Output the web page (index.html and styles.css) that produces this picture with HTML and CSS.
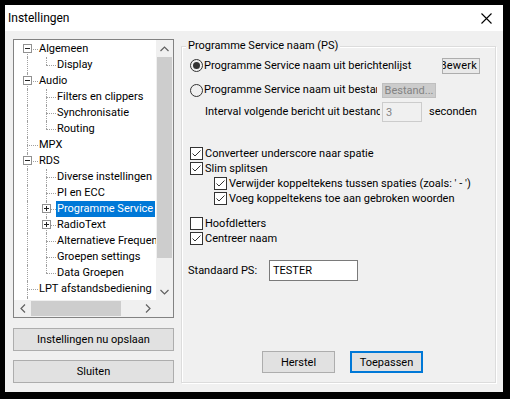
FILE: index.html
```html
<!DOCTYPE html>
<html lang="nl">
<head>
  <meta charset="UTF-8">
  <title>Instellingen</title>
  <link rel="stylesheet" href="styles.css">
</head>
<body>
  <div class="window">
    <div class="titlebar">
      <span class="title">Instellingen</span>
      <svg class="close" width="11" height="11" viewBox="0 0 11 11"><path d="M0.5 0.5L10.5 10.5M10.5 0.5L0.5 10.5" stroke="#000" stroke-width="1.1" fill="none"/></svg>
    </div>

    <div class="content">
      <div class="sidebar">
        <div class="tree">
          <div class="tree-rows">
            <div class="node"><span class="cell c0 f"><i class="exp"></i></span><span class="lbl">Algemeen</span></div>
            <div class="node"><span class="cell c0 v"></span><span class="cell c1 l"></span><span class="lbl">Display</span></div>
            <div class="node"><span class="cell c0 t"><i class="exp"></i></span><span class="lbl">Audio</span></div>
            <div class="node"><span class="cell c0 v"></span><span class="cell c1 t"></span><span class="lbl">Filters en clippers</span></div>
            <div class="node"><span class="cell c0 v"></span><span class="cell c1 t"></span><span class="lbl">Synchronisatie</span></div>
            <div class="node"><span class="cell c0 v"></span><span class="cell c1 l"></span><span class="lbl">Routing</span></div>
            <div class="node"><span class="cell c0 t"></span><span class="lbl">MPX</span></div>
            <div class="node"><span class="cell c0 t"><i class="exp"></i></span><span class="lbl">RDS</span></div>
            <div class="node"><span class="cell c0 v"></span><span class="cell c1 t"></span><span class="lbl">Diverse instellingen</span></div>
            <div class="node"><span class="cell c0 v"></span><span class="cell c1 t"></span><span class="lbl">PI en ECC</span></div>
            <div class="node"><span class="cell c0 v"></span><span class="cell c1 t"><i class="exp plus"></i></span><span class="lbl selected">Programme Service</span></div>
            <div class="node"><span class="cell c0 v"></span><span class="cell c1 t"><i class="exp plus"></i></span><span class="lbl">RadioText</span></div>
            <div class="node"><span class="cell c0 v"></span><span class="cell c1 t"></span><span class="lbl">Alternatieve Frequenties</span></div>
            <div class="node"><span class="cell c0 v"></span><span class="cell c1 t"></span><span class="lbl">Groepen settings</span></div>
            <div class="node"><span class="cell c0 v"></span><span class="cell c1 l"></span><span class="lbl">Data Groepen</span></div>
            <div class="node"><span class="cell c0 t"></span><span class="lbl">LPT afstandsbediening</span></div>
            <div class="node"><span class="cell c0 l"></span><span class="lbl">Log bestanden</span></div>
          </div>
          <div class="vscroll">
            <span class="arrow"><svg width="9" height="6" viewBox="0 0 9 6"><path d="M0.5 5L4.5 1L8.5 5" stroke="#606060" stroke-width="1.2" fill="none"/></svg></span>
            <span class="vtrack"><span class="vthumb"></span></span>
            <span class="arrow"><svg width="9" height="6" viewBox="0 0 9 6"><path d="M0.5 1L4.5 5L8.5 1" stroke="#606060" stroke-width="1.2" fill="none"/></svg></span>
          </div>
          <div class="hscroll">
            <span class="arrow"><svg width="6" height="9" viewBox="0 0 6 9"><path d="M5 0.5L1 4.5L5 8.5" stroke="#606060" stroke-width="1.2" fill="none"/></svg></span>
            <span class="htrack"><span class="hthumb"></span></span>
            <span class="arrow"><svg width="6" height="9" viewBox="0 0 6 9"><path d="M1 0.5L5 4.5L1 8.5" stroke="#606060" stroke-width="1.2" fill="none"/></svg></span>
          </div>
          <div class="corner"></div>
        </div>

        <button class="btn side-btn save-btn">Instellingen nu opslaan</button>
        <button class="btn side-btn">Sluiten</button>
      </div>

      <div class="group">
        <div class="group-title">Programme Service naam (PS)</div>

        <div class="row radio-row first">
          <span class="radio checked"></span>
          <span class="txt">Programme Service naam uit berichtenlijst</span>
          <button class="btn small bewerk"><span>Bewerk</span></button>
        </div>

        <div class="row radio-row second">
          <span class="radio"></span>
          <span class="txt clip-bestand">Programme Service naam uit bestand</span>
          <button class="btn small disabled bestand">Bestand...</button>
        </div>

        <div class="row interval-row">
          <span class="txt clip-interval">Interval volgende bericht uit bestand</span>
          <span class="field disabled small-field">3</span>
          <span class="txt seconds">seconden</span>
        </div>

        <div class="checks">
          <div class="row check-row"><span class="check"><svg width="11" height="11" viewBox="0 0 11 11"><path d="M1.5 5.5L4 8L9.5 2.5" stroke="#333" stroke-width="1" fill="none"/></svg></span><span class="txt">Converteer underscore naar spatie</span></div>
          <div class="row check-row"><span class="check"><svg width="11" height="11" viewBox="0 0 11 11"><path d="M1.5 5.5L4 8L9.5 2.5" stroke="#333" stroke-width="1" fill="none"/></svg></span><span class="txt">Slim splitsen</span></div>
          <div class="row check-row sub"><span class="check"><svg width="11" height="11" viewBox="0 0 11 11"><path d="M1.5 5.5L4 8L9.5 2.5" stroke="#333" stroke-width="1" fill="none"/></svg></span><span class="txt">Verwijder koppeltekens tussen spaties (zoals: ' - ')</span></div>
          <div class="row check-row sub"><span class="check"><svg width="11" height="11" viewBox="0 0 11 11"><path d="M1.5 5.5L4 8L9.5 2.5" stroke="#333" stroke-width="1" fill="none"/></svg></span><span class="txt">Voeg koppeltekens toe aan gebroken woorden</span></div>
        </div>

        <div class="checks second-checks">
          <div class="row check-row"><span class="check"></span><span class="txt">Hoofdletters</span></div>
          <div class="row check-row"><span class="check"><svg width="11" height="11" viewBox="0 0 11 11"><path d="M1.5 5.5L4 8L9.5 2.5" stroke="#333" stroke-width="1" fill="none"/></svg></span><span class="txt">Centreer naam</span></div>
        </div>

        <div class="row ps-row">
          <span class="txt ps-label">Standaard PS:</span>
          <span class="field ps-field">TESTER</span>
        </div>

        <div class="actions">
          <button class="btn action">Herstel</button>
          <button class="btn action default">Toepassen</button>
        </div>
      </div>
    </div>
  </div>
</body>
</html>
```

FILE: styles.css
```css
body {
  margin: 0;
  background-color: #000;
  font-family: Roboto, "Liberation Sans", sans-serif;
  font-size: 11px;
  color: #000;
}

.window {
  margin: 5px 0 0 5px;
  width: 498px;
  height: 387px;
  background-color: #f0f0f0;
  display: flex;
  flex-direction: column;
}

.titlebar {
  height: 26px;
  background-color: #fff;
  display: flex;
  align-items: center;
  justify-content: space-between;
  padding: 0 11px 0 3px;
  flex-shrink: 0;
}

.title {
  font-size: 12px;
}

.close {
  display: block;
}

.content {
  flex: 1;
  display: flex;
  gap: 7px;
  padding: 8px 7px 9px 8px;
}

/* left column */

.sidebar {
  width: 161px;
  display: flex;
  flex-direction: column;
}

.tree {
  height: 279px;
  box-sizing: border-box;
  border: 1px solid #828282;
  background-color: #fff;
  display: grid;
  grid-template-columns: 142px 17px;
  grid-template-rows: 260px 17px;
}

.tree-rows {
  overflow: hidden;
  padding-top: 1px;
}

.node {
  display: flex;
  height: 16px;
  align-items: center;
  padding-left: 3px;
  white-space: nowrap;
}

.cell {
  position: relative;
  height: 16px;
  flex-shrink: 0;
}

.c0 {
  width: 21px;
  --x: 10px;
}

.c1 {
  width: 18px;
  --x: 8px;
}

.cell::before,
.cell::after {
  content: "";
  position: absolute;
}

.cell::before {
  left: var(--x);
  border-left: 1px dotted #a0a0a0;
}

.v::before,
.t::before {
  top: 0;
  bottom: 0;
}

.l::before {
  top: 0;
  height: 8px;
}

.f::before {
  top: 8px;
  bottom: 0;
}

.t::after,
.l::after,
.f::after {
  top: 8px;
  left: var(--x);
  right: 0;
  border-top: 1px dotted #a0a0a0;
}

.exp {
  position: absolute;
  z-index: 1;
  left: calc(var(--x) - 4px);
  top: 3px;
  width: 9px;
  height: 9px;
  box-sizing: border-box;
  border: 1px solid #919191;
  background-color: #fff;
}

.exp::before {
  content: "";
  position: absolute;
  left: 1px;
  top: 3px;
  width: 5px;
  height: 1px;
  background-color: #222;
}

.exp.plus::after {
  content: "";
  position: absolute;
  left: 3px;
  top: 1px;
  width: 1px;
  height: 5px;
  background-color: #222;
}

.lbl {
  padding: 0 2px 0 1px;
  line-height: 16px;
  height: 16px;
}

.lbl.selected {
  background-color: #0078d7;
  color: #fff;
}

.vscroll,
.hscroll,
.corner {
  background-color: #f0f0f0;
}

.vscroll {
  display: flex;
  flex-direction: column;
}

.hscroll {
  display: flex;
}

.arrow {
  width: 17px;
  height: 17px;
  display: flex;
  align-items: center;
  justify-content: center;
  flex-shrink: 0;
}

.vtrack {
  flex: 1;
  padding: 0 1px;
}

.vthumb {
  display: block;
  height: 201px;
  background-color: #cdcdcd;
}

.htrack {
  flex: 1;
  padding: 1px 0;
}

.hthumb {
  display: block;
  width: 90px;
  height: 100%;
  background-color: #cdcdcd;
}

.btn {
  font-family: inherit;
  font-size: 11px;
  color: #000;
  background-color: #e1e1e1;
  border: 1px solid #adadad;
  padding: 0;
  box-sizing: border-box;
  white-space: nowrap;
}

.side-btn {
  height: 23px;
  width: 100%;
  margin-top: 9px;
}

.save-btn {
  margin-top: 10px;
}

/* right group */

.group {
  flex: 1;
  margin-top: 7px;
  border: 1px solid #dcdcdc;
  box-shadow: inset 1px 1px 0 #fff, 1px 1px 0 #fff;
  display: flex;
  flex-direction: column;
  padding-bottom: 9px;
}

.group-title {
  align-self: flex-start;
  margin: -9px 0 0 4px;
  padding: 0 2px;
  height: 16px;
  line-height: 16px;
  background-color: #f0f0f0;
}

.row {
  display: flex;
  align-items: center;
  padding-left: 8px;
  white-space: nowrap;
}

.radio-row.first {
  height: 17px;
  margin-top: 3px;
  padding-right: 15px;
}

.radio-row.second {
  height: 16px;
  margin-top: 8px;
}

.radio {
  width: 13px;
  height: 13px;
  box-sizing: border-box;
  border: 1px solid #333;
  border-radius: 50%;
  margin-right: 1px;
  display: flex;
  align-items: center;
  justify-content: center;
  flex-shrink: 0;
}

.radio.checked::after {
  content: "";
  width: 7px;
  height: 7px;
  border-radius: 50%;
  background-color: #333;
}

.txt {
  line-height: 16px;
}

.bewerk {
  margin-left: auto;
  width: 38px;
  height: 16px;
  overflow: hidden;
  display: flex;
  justify-content: flex-end;
  align-items: center;
  padding-right: 2px;
  background-color: #e9e9e9;
  letter-spacing: 0.2px;
}

.clip-bestand {
  width: 173px;
  overflow: hidden;
}

.bestand {
  margin-left: 5px;
  width: 54px;
  height: 15px;
  line-height: 13px;
}

.disabled {
  background-color: #cccccc;
  border-color: #bfbfbf;
  color: #838383;
}

.interval-row {
  height: 20px;
  margin-top: 4px;
  padding-left: 23px;
}

.clip-interval {
  width: 175px;
  margin-right: 2px;
  overflow: hidden;
}

.field {
  box-sizing: border-box;
  border: 1px solid #7a7a7a;
  background-color: #fff;
  padding-left: 3px;
  display: flex;
  align-items: center;
}

.small-field {
  width: 40px;
  height: 20px;
  background-color: #f0f0f0;
  border-color: #cccccc;
  color: #838383;
}

.seconds {
  margin-left: 7px;
}

.checks {
  margin-top: 24px;
}

.second-checks {
  margin-top: 10px;
}

.check-row {
  height: 15px;
}

.check-row.sub {
  padding-left: 32px;
}

.check {
  width: 13px;
  height: 13px;
  box-sizing: border-box;
  border: 1px solid #333;
  background-color: #fff;
  margin-right: 2px;
  flex-shrink: 0;
}

.check svg {
  display: block;
}

.ps-row {
  height: 21px;
  margin-top: 14px;
  padding-left: 6px;
}

.ps-label {
  width: 81px;
}

.ps-field {
  width: 89px;
  height: 21px;
  border-color: #7a7a7a;
}

.actions {
  margin-top: auto;
  display: flex;
  gap: 15px;
  padding-left: 80px;
}

.action {
  width: 73px;
  height: 22px;
}

.action.default {
  border: 2px solid #0078d7;
}
```
